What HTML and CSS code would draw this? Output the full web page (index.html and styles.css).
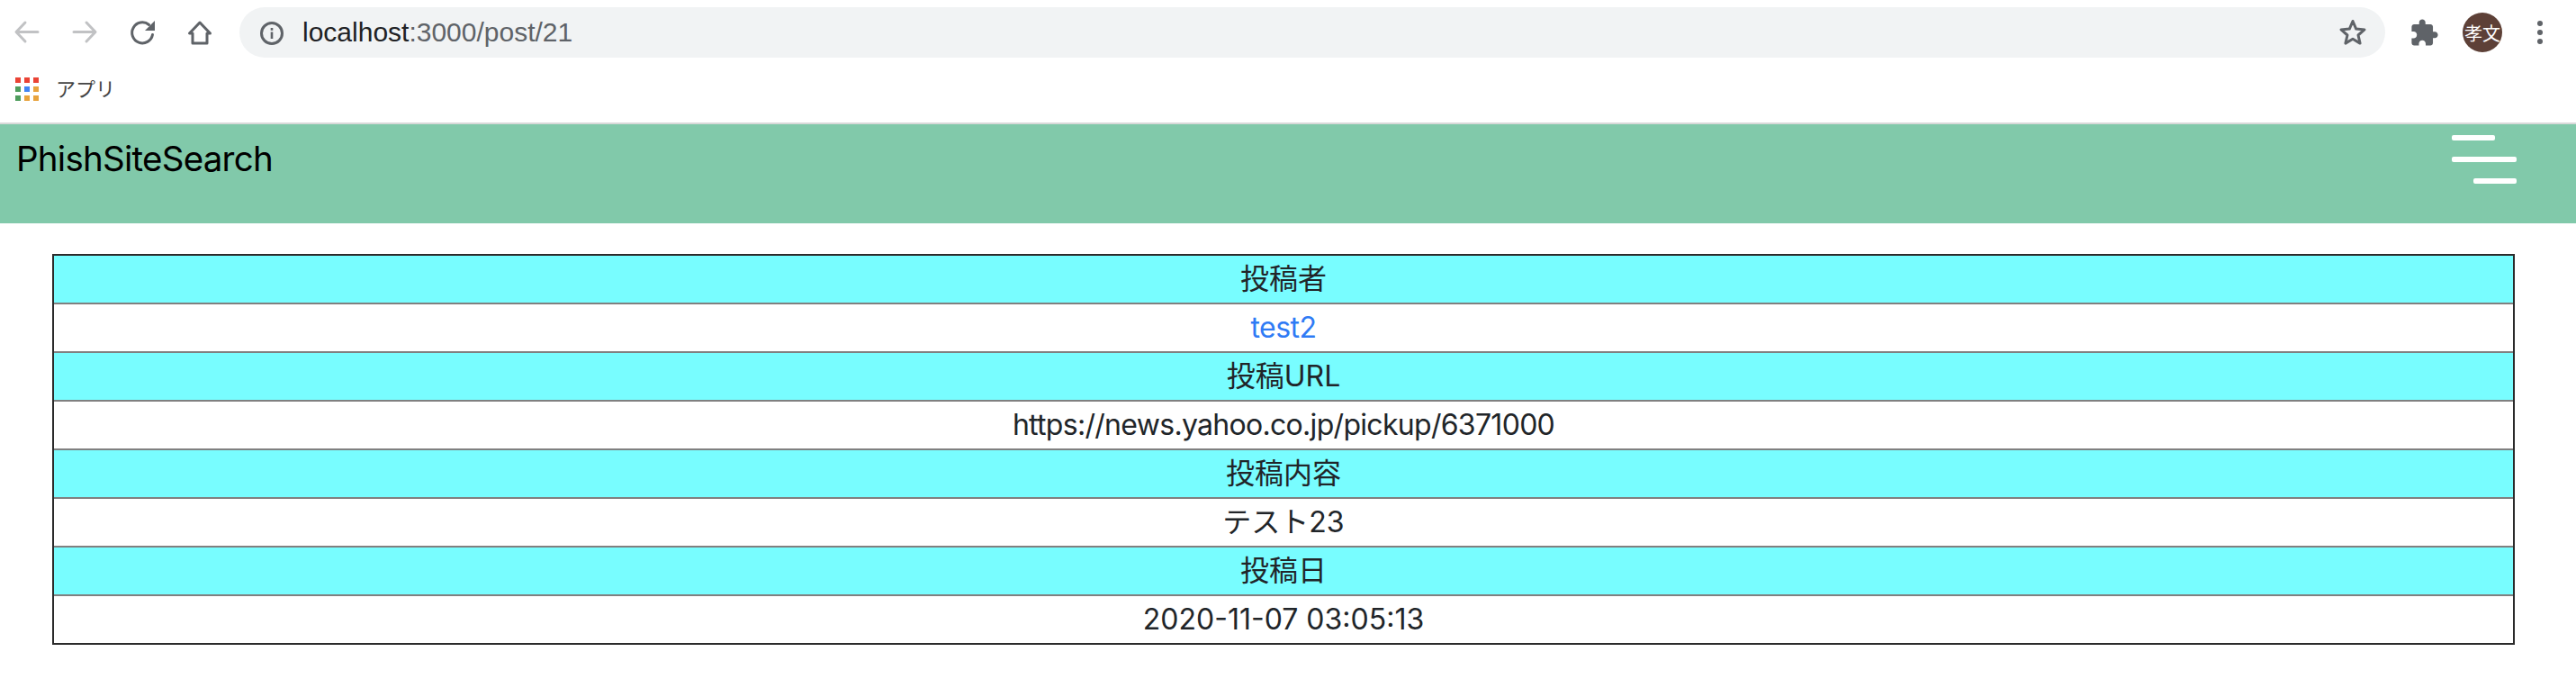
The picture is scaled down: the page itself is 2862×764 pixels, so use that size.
FILE: index.html
```html
<!DOCTYPE html>
<html lang="ja">
<head>
  <meta charset="utf-8">
  <title>PhishSiteSearch</title>
  <link rel="stylesheet" href="styles.css">
</head>
<body>
  <div class="toolbar">
    <svg class="tool-icon" viewBox="0 0 32 32"><path class="stroke-off" d="M28 15.5H4.5M14 5 4 15.5 14 26"/></svg>
    <svg class="tool-icon nav-gap" viewBox="0 0 32 32"><path class="stroke-off" d="M4 15.5h23.5M18 5l10 10.5L18 26"/></svg>
    <svg class="tool-icon nav-gap" viewBox="0 0 32 32">
      <path class="stroke-on" d="M23.5 7.5A11.5 11.5 0 1 0 27.5 18.5"/>
      <path class="fill-on" d="M30 3v11H19z"/>
    </svg>
    <svg class="tool-icon nav-gap" viewBox="0 0 32 32"><path class="stroke-on" d="M16 5 4.5 17H8v11h16V17h3.5z"/></svg>

    <div class="address">
      <svg class="info-icon" viewBox="0 0 30 30">
        <circle class="stroke-on" cx="15" cy="16" r="11.5"/>
        <rect class="fill-on" x="13.7" y="14.5" width="2.6" height="7.5"/>
        <rect class="fill-on" x="13.7" y="10" width="2.6" height="2.8"/>
      </svg>
      <span class="url"><span class="url-host">localhost</span>:3000/post/21</span>
      <svg class="tool-icon" viewBox="0 0 32 32"><path class="stroke-on" d="M16 3.5l3.7 8.6 9.3.8-7 6.1 2.1 9.1-8.1-4.8-8.1 4.8 2.1-9.1-7-6.1 9.3-.8z"/></svg>
    </div>

    <svg class="puzzle-icon" viewBox="1 0 23 23"><path class="fill-on" d="M20.5 11H19V7c0-1.1-.9-2-2-2h-4V3.5C13 2.12 11.88 1 10.5 1S8 2.12 8 3.5V5H4c-1.1 0-1.99.9-1.99 2v3.8H3.5c1.49 0 2.7 1.21 2.7 2.7s-1.21 2.7-2.7 2.7H2V20c0 1.1.9 2 2 2h3.8v-1.5c0-1.49 1.21-2.7 2.7-2.7 1.49 0 2.7 1.21 2.7 2.7V22H17c1.1 0 2-.9 2-2v-4h1.5c1.38 0 2.5-1.12 2.5-2.5S21.88 11 20.5 11z"/></svg>
    <div class="avatar">孝文</div>
    <svg class="menu-icon" viewBox="0 0 24 32">
      <circle class="fill-on" cx="12" cy="6" r="3"/>
      <circle class="fill-on" cx="12" cy="16" r="3"/>
      <circle class="fill-on" cx="12" cy="26" r="3"/>
    </svg>
  </div>

  <div class="bookmarks">
    <svg class="apps-icon" viewBox="0 0 26 26">
      <rect x="0" y="0" width="6" height="6" fill="#ea4335"/>
      <rect x="10" y="0" width="6" height="6" fill="#ea4335"/>
      <rect x="20" y="0" width="6" height="6" fill="#ea4335"/>
      <rect x="0" y="10" width="6" height="6" fill="#4f9d5d"/>
      <rect x="10" y="10" width="6" height="6" fill="#4285f4"/>
      <rect x="20" y="10" width="6" height="6" fill="#e8a33d"/>
      <rect x="0" y="20" width="6" height="6" fill="#4f9d5d"/>
      <rect x="10" y="20" width="6" height="6" fill="#e8a33d"/>
      <rect x="20" y="20" width="6" height="6" fill="#e8a33d"/>
    </svg>
    <span class="bookmark-label">アプリ</span>
  </div>

  <header class="site-header">
    <div class="site-title">PhishSiteSearch</div>
    <div class="hamburger">
      <span class="bar bar-top"></span>
      <span class="bar bar-middle"></span>
      <span class="bar bar-bottom"></span>
    </div>
  </header>

  <main class="content">
    <table class="post-table">
      <tr class="label-row"><td>投稿者</td></tr>
      <tr><td><a class="user-link" href="#">test2</a></td></tr>
      <tr class="label-row"><td>投稿URL</td></tr>
      <tr><td class="url-cell">https://news.yahoo.co.jp/pickup/6371000</td></tr>
      <tr class="label-row"><td>投稿内容</td></tr>
      <tr><td>テスト23</td></tr>
      <tr class="label-row"><td>投稿日</td></tr>
      <tr><td>2020-11-07 03:05:13</td></tr>
    </table>
  </main>
</body>
</html>
```

FILE: styles.css
```css
body {
  margin: 0;
  background-color: #fff;
  font-family: Inter, "Noto Sans CJK JP", sans-serif;
  color: #212529;
}

/* browser chrome */
.toolbar {
  display: flex;
  align-items: center;
  height: 72px;
  padding: 0 28px 0 14px;
}
.tool-icon {
  width: 32px;
  height: 32px;
  flex: none;
}
.nav-gap {
  margin-left: 32px;
}
.stroke-off, .stroke-on {
  fill: none;
  stroke-width: 3;
  stroke-linecap: round;
  stroke-linejoin: round;
}
.stroke-off {
  stroke: #c1c2c4;
}
.stroke-on {
  stroke: #5f6368;
}
.fill-on {
  fill: #5f6368;
}
.address {
  display: flex;
  align-items: center;
  flex: 1;
  height: 56px;
  margin-left: 28px;
  padding: 0 20px 0 21px;
  background-color: #f1f3f4;
  border-radius: 28px;
}
.info-icon {
  width: 30px;
  height: 30px;
  flex: none;
}
.url {
  flex: 1;
  margin-left: 19px;
  font-family: "Liberation Sans", sans-serif;
  font-size: 30px;
  color: #5f6368;
}
.url-host {
  color: #202124;
}
.puzzle-icon {
  width: 32px;
  height: 32px;
  flex: none;
  margin-left: 28px;
}
.avatar {
  display: flex;
  align-items: center;
  justify-content: center;
  width: 44px;
  height: 44px;
  flex: none;
  margin-left: 26px;
  border-radius: 50%;
  background-color: #5d4037;
  color: #fff;
  font-size: 20px;
}
.menu-icon {
  width: 24px;
  height: 32px;
  flex: none;
  margin-left: 30px;
}
.bookmarks {
  display: flex;
  align-items: flex-start;
  height: 50px;
  padding: 14px 0 0 17px;
  border-bottom: 2px solid #d9d9d9;
}
.apps-icon {
  width: 26px;
  height: 26px;
  flex: none;
}
.bookmark-label {
  margin-left: 19px;
  font-size: 22px;
  line-height: 26px;
  color: #444;
}

/* page */
.site-header {
  display: flex;
  justify-content: space-between;
  height: 110px;
  padding-right: 66px;
  background-color: #81c9aa;
}
.site-title {
  padding: 14px 0 0 18px;
  font-size: 38.5px;
  line-height: 48px;
  letter-spacing: -0.75px;
  color: #000;
}
.hamburger {
  display: flex;
  flex-direction: column;
  gap: 18px;
  width: 72px;
  padding-top: 12px;
}
.bar {
  display: block;
  height: 6px;
  background-color: #fff;
  border-radius: 2px;
}
.bar-top {
  width: 48px;
}
.bar-bottom {
  width: 48px;
  align-self: flex-end;
}
.content {
  padding: 34px 68px 0 58px;
}
.post-table {
  width: 100%;
  border-collapse: separate;
  border-spacing: 0;
  border: 2px solid #2b2b2b;
  font-size: 32px;
  text-align: center;
}
.post-table td {
  height: 52px;
  padding: 0;
  border-top: 2px solid #808080;
  line-height: 52px;
}
.post-table tr:first-child td {
  border-top: 0;
}
.label-row td {
  background-color: #78fdff;
}
.url-cell {
  letter-spacing: -0.7px;
}
.user-link {
  color: #2f7bf5;
  letter-spacing: -0.5px;
  text-decoration: none;
}
```
